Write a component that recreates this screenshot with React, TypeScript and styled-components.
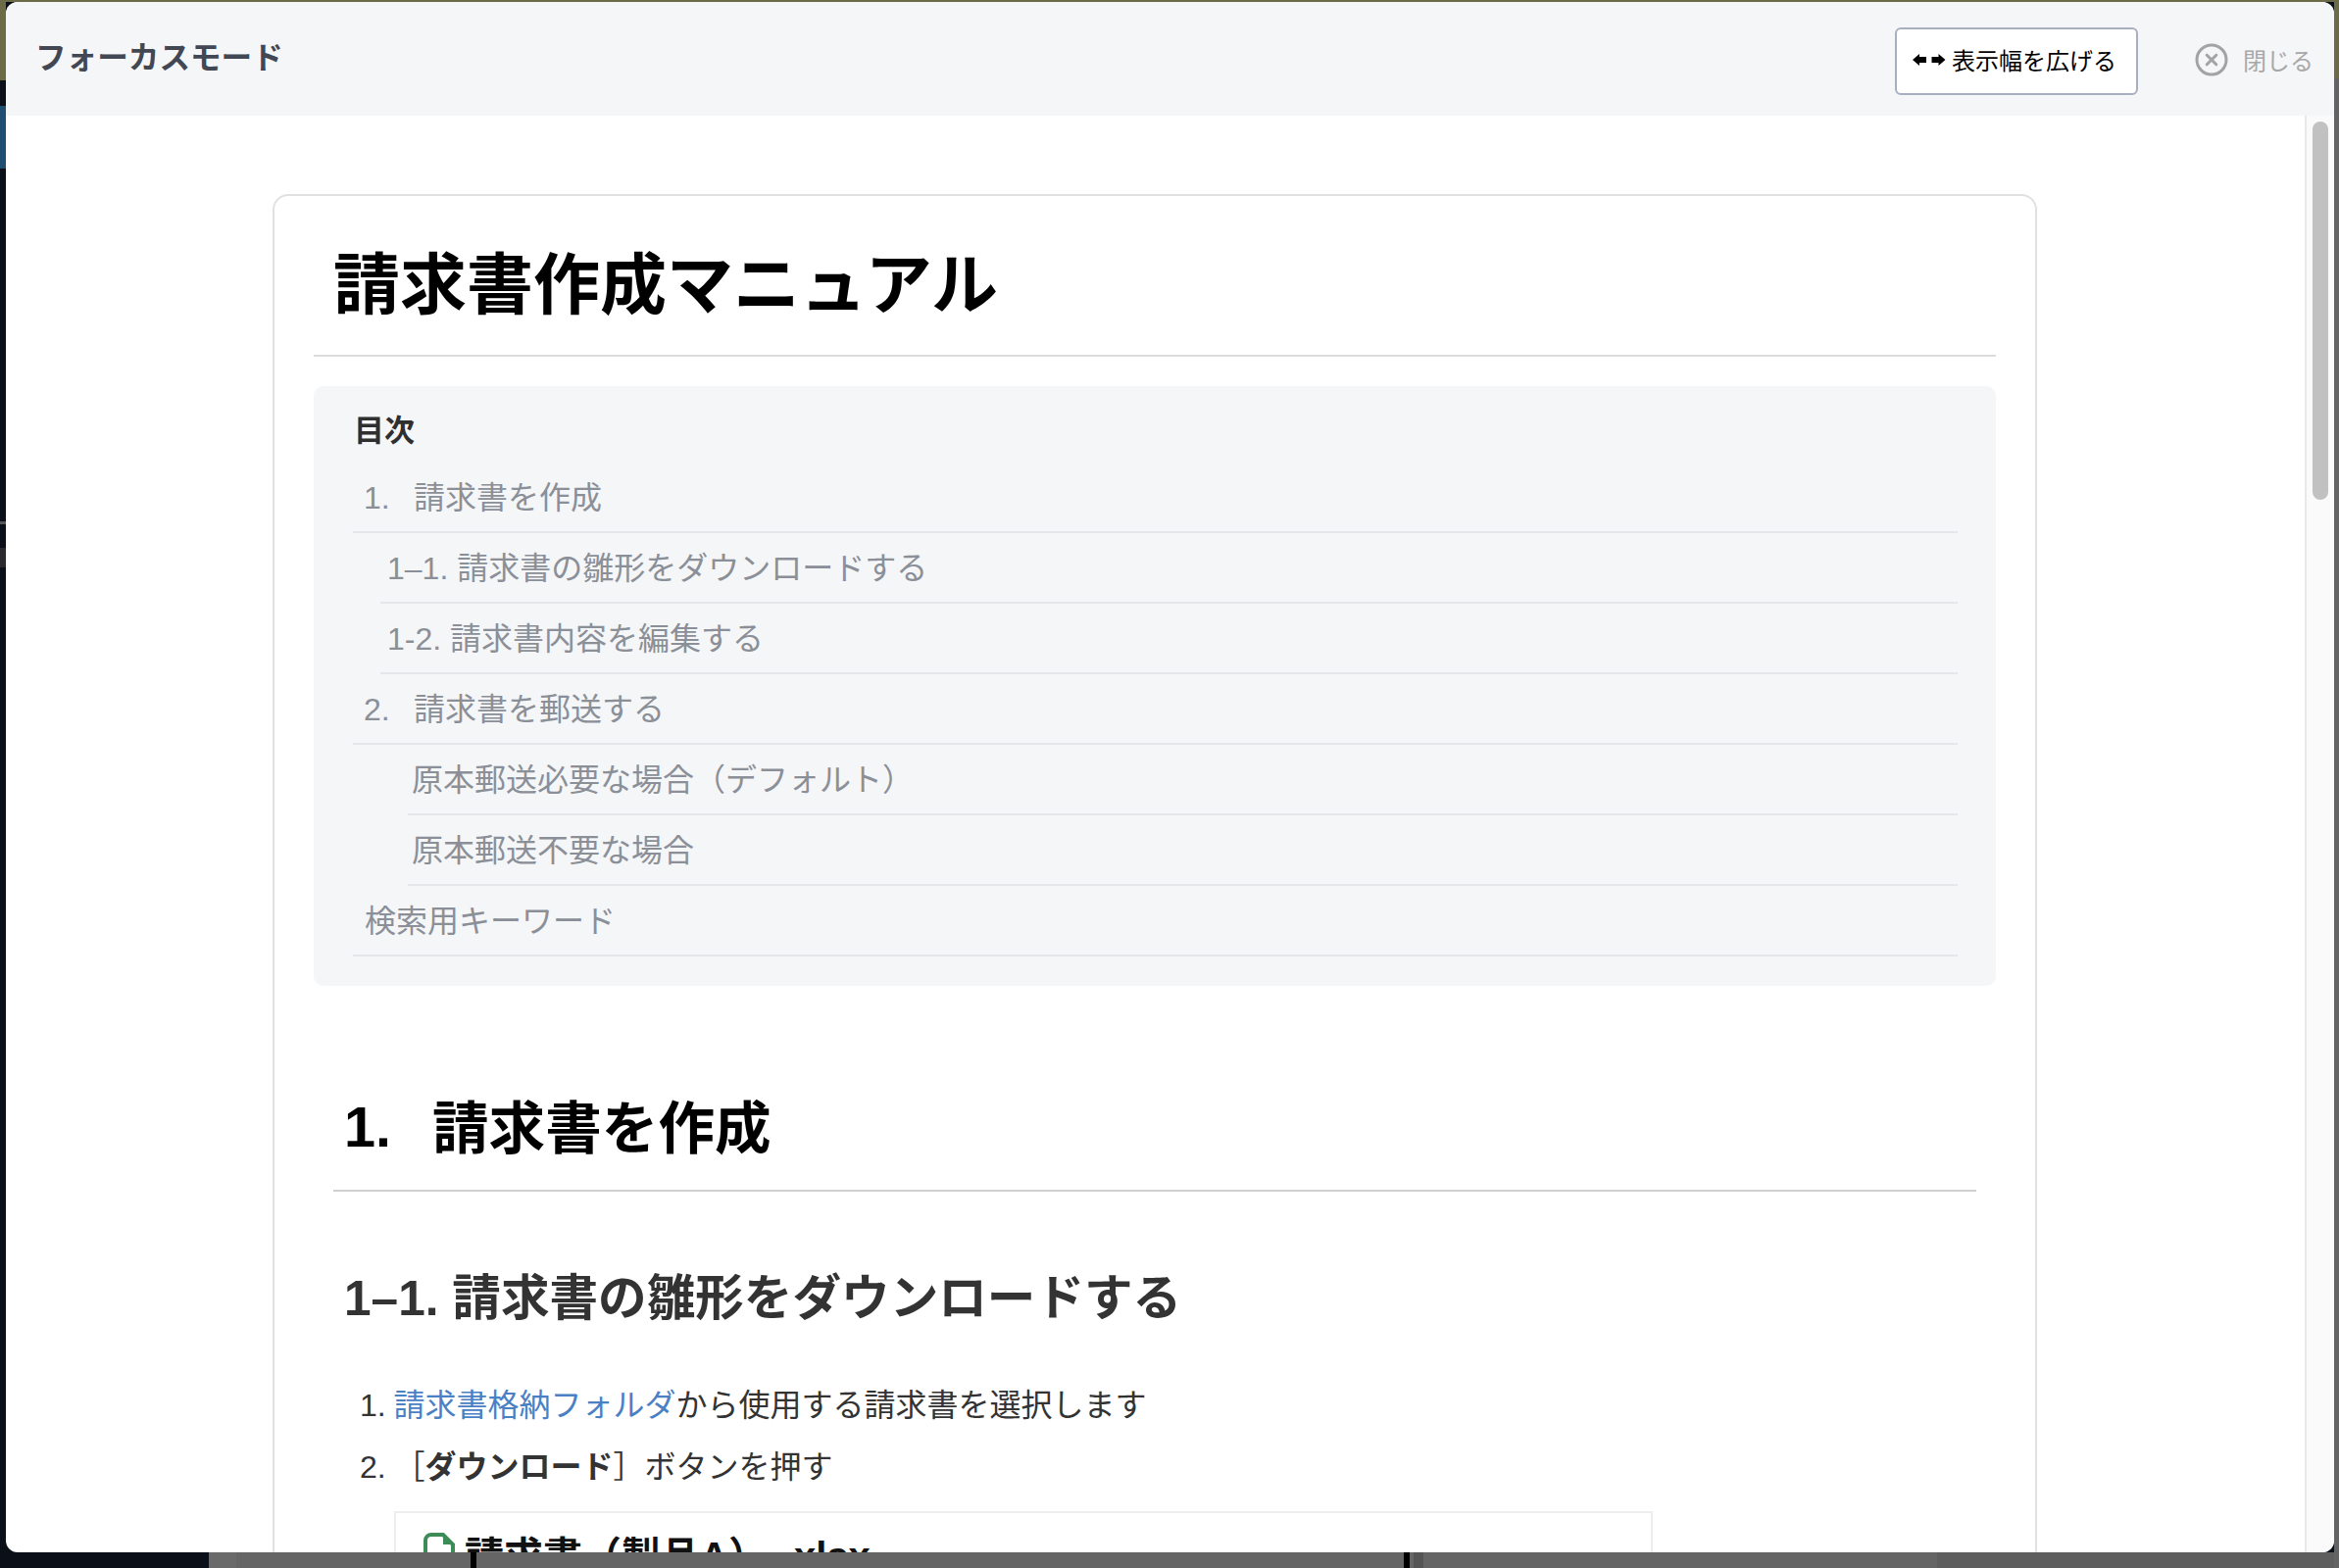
import React from "react";
import styled, { createGlobalStyle } from "styled-components";

const FONT = `"Liberation Sans", "Noto Sans CJK JP", sans-serif`;

const Global = createGlobalStyle`
  html, body { margin: 0; padding: 0; height: 100%; background: #0b0f17; }
  * { box-sizing: border-box; }
  body { font-family: ${FONT}; overflow: hidden; }
`;

const Backdrop = styled.div`
  width: 2386px;
  height: 1600px;
  display: grid;
  grid-template-columns: 6px 1fr 5px;
  grid-template-rows: 2px 1fr 16px;
  overflow: hidden;
`;

const Rail = styled.div<{ $side: "left" | "right" }>`
  grid-row: 1 / 4;
  grid-column: ${(p) => (p.$side === "left" ? 1 : 3)};
  display: flex;
  flex-direction: column;
  background: ${(p) => (p.$side === "left" ? "#0b0f17" : "#636363")};
`;

const Seg = styled.div<{ $h: number; $c: string }>`
  height: ${(p) => p.$h}px;
  flex: none;
  background: ${(p) => p.$c};
`;

const TopStrip = styled.div`
  grid-row: 1;
  grid-column: 2;
  background: #6b6b47;
`;

const BottomStrip = styled.div`
  grid-row: 3;
  grid-column: 2;
  display: flex;
  background: #656565;
`;

const BottomSeg = styled.div<{ $w: number; $c: string }>`
  width: ${(p) => p.$w}px;
  flex: none;
  background: ${(p) => p.$c};
`;

const Modal = styled.div`
  grid-row: 2;
  grid-column: 2;
  display: flex;
  flex-direction: column;
  min-height: 0;
  background: #fff;
  border-radius: 12px;
  overflow: hidden;
`;

const Header = styled.header`
  height: 116px;
  flex: none;
  display: flex;
  align-items: center;
  justify-content: space-between;
  padding: 4px 21px 0 30px;
  background: #f5f6f8;
`;

const ModalTitle = styled.h1`
  margin: -12px 0 0;
  font-size: 31.6px;
  font-weight: 700;
  color: #414753;
`;

const HeaderActions = styled.div`
  display: flex;
  align-items: center;
`;

const WidenButton = styled.button`
  width: 248px;
  height: 69px;
  display: flex;
  align-items: center;
  gap: 6px;
  padding: 0 0 3px 16px;
  background: #fff;
  border: 2px solid #a8afc0;
  border-radius: 6px;
  font-family: ${FONT};
  font-size: 24px;
  color: #000;
`;

const CloseButton = styled.button`
  display: flex;
  align-items: center;
  gap: 15px;
  margin: 0 0 3px 58px;
  padding: 0;
  border: none;
  background: none;
  font-family: ${FONT};
  font-size: 24px;
  color: #a8a8a8;
`;

const Body = styled.div`
  flex: 1;
  min-height: 0;
  display: flex;
`;

const Scroller = styled.main`
  flex: 1;
  min-width: 0;
  overflow: hidden;
  display: flex;
  justify-content: center;
  padding: 80px 1px 0 0;
`;

const ScrollTrack = styled.div`
  width: 30px;
  flex: none;
  background: #fafafa;
  border-left: 2px solid #e8e8e8;
  padding: 6px 0 0 6px;
`;

const ScrollThumb = styled.div`
  width: 16px;
  height: 386px;
  border-radius: 8px;
  background: #c1c1c1;
`;

const Card = styled.article`
  width: 1800px;
  flex: none;
  align-self: flex-start;
  padding: 0 40px;
  background: #fff;
  border: 2px solid #e0e0e0;
  border-radius: 16px;
`;

const DocTitle = styled.h1`
  margin: 0;
  height: 164px;
  padding: 41px 0 0 20px;
  font-size: 68px;
  line-height: 100px;
  font-weight: 700;
  color: #000;
  border-bottom: 2px solid #dcdcdc;
`;

const Toc = styled.nav`
  margin-top: 30px;
  height: 612px;
  padding: 25px 39px 0 40px;
  background: #f5f6f8;
  border-radius: 10px;
`;

const TocHeading = styled.div`
  height: 53px;
  margin-left: 1px;
  font-size: 31px;
  line-height: 42px;
  font-weight: 700;
  color: #2f2f2f;
`;

const TocList = styled.ul`
  list-style: none;
  margin: 0;
  padding: 0;
`;

const TocRow = styled.li<{ $indent: number; $pad: number }>`
  display: flex;
  align-items: center;
  height: 72px;
  margin-left: ${(p) => p.$indent}px;
  padding: 0 0 5px ${(p) => p.$pad}px;
  border-bottom: 2px solid #e4e6e9;
  font-size: 32px;
  color: #8b8f97;
`;

const TocNum = styled.span`
  width: 51px;
  flex: none;
  padding-top: 7px;
`;

const SectionTitle = styled.h2`
  display: flex;
  align-items: center;
  margin: 96px 20px 0;
  height: 114px;
  padding: 0 0 22px 11px;
  font-size: 57.6px;
  font-weight: 700;
  color: #000;
  border-bottom: 2px solid #d0d0d0;
`;

const SectionNum = styled.span`
  width: 90px;
  flex: none;
  padding-top: 6px;
`;

const SubTitle = styled.h3`
  margin: 76px 0 0;
  padding-left: 31px;
  font-size: 49.6px;
  line-height: 66px;
  font-weight: 700;
  color: #333;
`;

const Steps = styled.ol`
  list-style: none;
  margin: 54px 0 0;
  padding: 0;
`;

const Step = styled.li`
  display: flex;
  height: 63px;
  padding-left: 47px;
  font-size: 32px;
  line-height: 44px;
  color: #333;
`;

const StepNum = styled.span`
  width: 34.5px;
  flex: none;
`;

const Link = styled.a`
  color: #4a80c4;
`;

const Attachment = styled.div`
  display: flex;
  align-items: flex-start;
  gap: 10px;
  width: 1284px;
  height: 200px;
  margin: 4px 0 0 82px;
  padding: 16px 0 0 28px;
  border: 2px solid #eee;
  font-size: 40px;
  line-height: 56px;
  font-weight: 700;
  color: #111;
`;

const FileExt = styled.span`
  margin-left: 16px;
`;

const FileGlyph = styled.svg`
  flex: none;
  width: 32px;
  height: 42px;
  margin-top: 4px;
`;

const ArrowPair = () => (
  <svg width="34" height="12" viewBox="0 0 34 12" aria-hidden="true">
    <path d="M0 6 L7 0 V3 H14 V9 H7 V12 Z" fill="#000" />
    <path d="M33.5 6 L26.5 0 V3 H19.5 V9 H26.5 V12 Z" fill="#000" />
  </svg>
);

const CloseIcon = () => (
  <svg width="34" height="34" viewBox="0 0 34 34" fill="none" stroke="#a3a3a3" aria-hidden="true">
    <circle cx="17" cy="17" r="15" strokeWidth="3" />
    <path d="M12.2 12.2 L21.8 21.8 M21.8 12.2 L12.2 21.8" strokeWidth="3" strokeLinecap="round" />
  </svg>
);

const FileIcon = () => (
  <FileGlyph viewBox="0 0 32 42" fill="none" aria-hidden="true">
    <path
      d="M8 2 H20 L30 12 V34 a6 6 0 0 1 -6 6 H8 a6 6 0 0 1 -6 -6 V8 a6 6 0 0 1 6 -6 Z"
      stroke="#3d8b57"
      strokeWidth="4"
    />
    <path d="M20 2 V12 H30 Z" fill="#3d8b57" />
  </FileGlyph>
);

const tocRows = [
  { indent: 0, pad: 11, num: "1.", text: "請求書を作成" },
  { indent: 28, pad: 7, text: "1–1. 請求書の雛形をダウンロードする" },
  { indent: 28, pad: 7, text: "1-2. 請求書内容を編集する" },
  { indent: 0, pad: 11, num: "2.", text: "請求書を郵送する" },
  { indent: 56, pad: 4, text: "原本郵送必要な場合（デフォルト）" },
  { indent: 56, pad: 4, text: "原本郵送不要な場合" },
  { indent: 0, pad: 12, text: "検索用キーワード" },
];

const leftRail = [
  { h: 82, c: "#6b6b47" },
  { h: 26, c: "#0b0f17" },
  { h: 64, c: "#1f4e70" },
  { h: 360, c: "#0b0f17" },
  { h: 3, c: "#555" },
  { h: 24, c: "#0b0f17" },
  { h: 20, c: "#2a2a2c" },
];

const rightRail = [
  { h: 80, c: "#6b6b47" },
  { h: 1520, c: "#636363" },
];

const bottomSegs = [
  { w: 207, c: "#0b0f17" },
  { w: 28, c: "#6a6a6a" },
  { w: 239, c: "#656565" },
  { w: 6, c: "#000" },
  { w: 946, c: "#656565" },
  { w: 6, c: "#000" },
  { w: 4, c: "#656565" },
  { w: 10, c: "#555" },
  { w: 524, c: "#656565" },
  { w: 405, c: "#5e5e5e" },
];

export default function App() {
  return (
    <>
      <Global />
      <Backdrop>
        <Rail $side="left">
          {leftRail.map((s, i) => (
            <Seg key={i} $h={s.h} $c={s.c} />
          ))}
        </Rail>
        <TopStrip />
        <Modal>
          <Header>
            <ModalTitle>フォーカスモード</ModalTitle>
            <HeaderActions>
              <WidenButton>
                <ArrowPair />
                表示幅を広げる
              </WidenButton>
              <CloseButton>
                <CloseIcon />
                閉じる
              </CloseButton>
            </HeaderActions>
          </Header>
          <Body>
            <Scroller>
              <Card>
                <DocTitle>請求書作成マニュアル</DocTitle>
                <Toc>
                  <TocHeading>目次</TocHeading>
                  <TocList>
                    {tocRows.map((r) => (
                      <TocRow key={r.text} $indent={r.indent} $pad={r.pad}>
                        {r.num && <TocNum>{r.num}</TocNum>}
                        {r.text}
                      </TocRow>
                    ))}
                  </TocList>
                </Toc>
                <SectionTitle>
                  <SectionNum>1.</SectionNum>請求書を作成
                </SectionTitle>
                <SubTitle>1–1. 請求書の雛形をダウンロードする</SubTitle>
                <Steps>
                  <Step>
                    <StepNum>1.</StepNum>
                    <span>
                      <Link>請求書格納フォルダ</Link>から使用する請求書を選択します
                    </span>
                  </Step>
                  <Step>
                    <StepNum>2.</StepNum>
                    <span>
                      ［<b>ダウンロード</b>］ボタンを押す
                    </span>
                  </Step>
                </Steps>
                <Attachment>
                  <FileIcon />
                  <span>
                    請求書（製品A）<FileExt>.xlsx</FileExt>
                  </span>
                </Attachment>
              </Card>
            </Scroller>
            <ScrollTrack>
              <ScrollThumb />
            </ScrollTrack>
          </Body>
        </Modal>
        <Rail $side="right">
          {rightRail.map((s, i) => (
            <Seg key={i} $h={s.h} $c={s.c} />
          ))}
        </Rail>
        <BottomStrip>
          {bottomSegs.map((s, i) => (
            <BottomSeg key={i} $w={s.w} $c={s.c} />
          ))}
        </BottomStrip>
      </Backdrop>
    </>
  );
}
